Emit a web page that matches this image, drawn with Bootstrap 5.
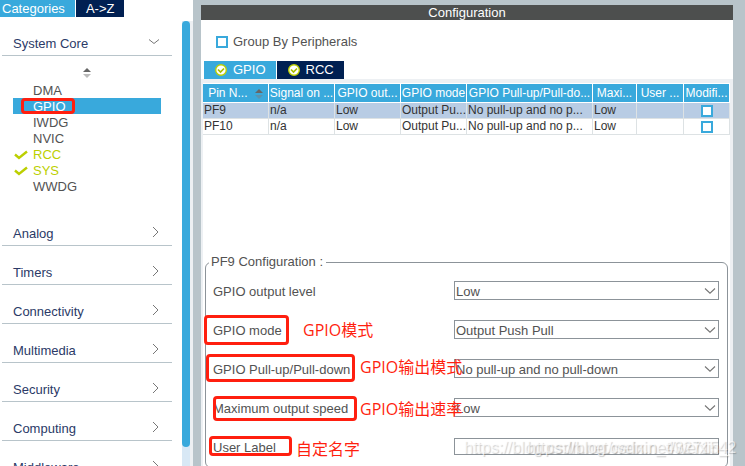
<!DOCTYPE html>
<html lang="en">
<head>
<meta charset="utf-8">
<meta name="viewport" content="width=device-width, initial-scale=1">
<title>Pin Configuration</title>
<link rel="stylesheet" href="https://cdn.jsdelivr.net/npm/bootstrap@5.3.0/dist/css/bootstrap.min.css">
<style>
:root{--sky:#39a9dc;--navy:#002052;--slate:#b8c4ca;--ink:#525252;--line:#8c9399;--pale:#edf0f3;--red:#ff1f0f}
body{font-family:"Liberation Sans",Arial,sans-serif;font-size:13px;line-height:16px;color:var(--ink);background:var(--slate)}
button{font:inherit}
.app{height:100vh;overflow:hidden}
.side{width:193px}
.side .tabs{gap:1px}
.side .tabs button,.tab-line button{border:0;border-radius:0;color:#fff;background:var(--navy)}
.side .tabs button{height:17px;padding:0 10px}
.side .tabs button:first-child{padding:0 10px 0 2px}
.side .tabs .on,.tab-line .on{background:var(--sky)}
.tree{overflow:hidden;padding-left:2px;padding-right:10px}
.cat{height:39px;padding:19px 12px 0 11px;border:0;border-bottom:1px solid var(--slate);background:none;color:#2b3a67}
.periph{padding:12px 11px 13px;margin:0}
.periph a{display:block;height:16px;line-height:18px;padding-left:20px;color:var(--ink);text-decoration:none;position:relative}
.periph a.on{background:var(--sky);color:#fff}
.periph a.ok{color:#bccf00}
.periph a svg{position:absolute;left:1px;top:4px}
.track{width:11px;background:#d8e8f5;border-right:3px solid var(--pale);margin-top:4px}
.thumb{height:426px;background:var(--sky);border-radius:4px}
.main{margin:5px 12px 0 8px;min-width:0;background:#fff}
.bar{height:15px;line-height:16px;background:#4d4f4e;color:#fff}
.group{padding:14px 15px 11px}
.sq{appearance:none;width:12px;height:12px;margin:0;border:2px solid var(--sky);background:#fff;border-radius:0;display:block}
.group .sq{margin-right:5px}
.tab-line{padding-left:3px;gap:1px}
.tab-line button{height:18px;padding:0 10px 0 11px;gap:6px}
.body-box{border:solid var(--pale);border-width:4px 3px 0 2px}
.pins{table-layout:fixed;width:100%;border-collapse:separate;border-spacing:0;font-size:12px}
.pins th,.pins td{padding:0 1px;overflow:hidden;white-space:nowrap;border-right:1px solid #dde2e4}
.pins th{height:20px;background:var(--sky);color:#fff;font-weight:400;text-align:center;border:1px solid #fff;border-left:0;padding:0}
.pins td{height:16px;line-height:15px;border-bottom:1px solid #dde2e4;color:#333}
.pins .sel td{background:#b8cce4}
.cfg{position:relative;border:1px solid var(--line);border-radius:6px;margin:119px 2px 0;padding:3px 8px 11px 7px;min-width:0}
.cfg legend{float:none;width:auto;font-size:13px;line-height:16px;margin:0 0 0 -4px;padding:0 3px 0 2px}
.cfg-row{height:19px;margin-bottom:20px}
.cfg-row label{flex:0 0 241px;padding-top:2px}
.cfg-row .form-select,.cfg-row .form-control{flex:1;min-width:0;height:19px;font-size:13px;line-height:17px;padding:1px 20px 0 1px;border:1px solid var(--line);border-radius:0;color:var(--ink);background-color:#fff}
.cfg-row .form-select{background-image:url("data:image/svg+xml,%3Csvg xmlns='http://www.w3.org/2000/svg' viewBox='0 0 12 8'%3E%3Cpath fill='none' stroke='%23757575' stroke-width='1.1' d='M1 1.5l5 4.7 5-4.7'/%3E%3C/svg%3E");background-size:12px 8px;background-position:right 2px center}
.cfg-row .form-control{height:17px}
.pen{position:absolute;border:3px solid var(--red);border-radius:4px;pointer-events:none}
.note{position:absolute;color:var(--red);font:16px/20px "Open Sans","Noto Sans CJK SC",sans-serif;white-space:nowrap}
.stamp{position:absolute;font-size:16px;line-height:18px;white-space:nowrap;color:rgba(255,255,255,.65);text-shadow:1px 1px 1px rgba(0,0,0,.2);pointer-events:none}
</style>
</head>
<body>
<div class="app d-flex">
<aside class="side d-flex flex-column bg-white flex-shrink-0">
  <div class="tabs d-flex"><button class="on" type="button">Categories</button><button type="button">A-&gt;Z</button></div>
  <div class="d-flex flex-grow-1 overflow-hidden">
    <nav class="tree flex-grow-1">
      <button class="cat d-flex w-100 justify-content-between" type="button">System Core<svg width="12" height="12"><path d="M1 3.5l5 4 5-4" fill="none" stroke="#777"/></svg></button>
      <div class="periph">
        <svg class="d-block mx-auto mb-1" width="8" height="10"><path d="M0 4l4-4 4 4z" fill="#666"/><path d="M0 6h8l-4 4z" fill="#bbb"/></svg>
        <a href="#">DMA</a>
        <a href="#" class="on">GPIO<span class="pen" style="left:8px;top:0;width:54px;height:16px"></span></a>
        <a href="#">IWDG</a><a href="#">NVIC</a>
        <a href="#" class="ok"><svg width="14" height="10"><path d="M1 4.5l4 3.5 8-6.500" fill="none" stroke="#bccf00" stroke-width="2.400"/></svg>RCC</a>
        <a href="#" class="ok"><svg width="14" height="10"><path d="M1 4.5l4 3.5 8-6.500" fill="none" stroke="#bccf00" stroke-width="2.400"/></svg>SYS</a>
        <a href="#">WWDG</a>
      </div>
      <button class="cat d-flex w-100 justify-content-between" type="button">Analog<svg width="8" height="12"><path d="M1 1l5 5-5 5" fill="none" stroke="#777"/></svg></button>
      <button class="cat d-flex w-100 justify-content-between" type="button">Timers<svg width="8" height="12"><path d="M1 1l5 5-5 5" fill="none" stroke="#777"/></svg></button>
      <button class="cat d-flex w-100 justify-content-between" type="button">Connectivity<svg width="8" height="12"><path d="M1 1l5 5-5 5" fill="none" stroke="#777"/></svg></button>
      <button class="cat d-flex w-100 justify-content-between" type="button">Multimedia<svg width="8" height="12"><path d="M1 1l5 5-5 5" fill="none" stroke="#777"/></svg></button>
      <button class="cat d-flex w-100 justify-content-between" type="button">Security<svg width="8" height="12"><path d="M1 1l5 5-5 5" fill="none" stroke="#777"/></svg></button>
      <button class="cat d-flex w-100 justify-content-between" type="button">Computing<svg width="8" height="12"><path d="M1 1l5 5-5 5" fill="none" stroke="#777"/></svg></button>
      <button class="cat d-flex w-100 justify-content-between" type="button">Middleware<svg width="8" height="12"><path d="M1 1l5 5-5 5" fill="none" stroke="#777"/></svg></button>
    </nav>
    <div class="track flex-shrink-0"><div class="thumb"></div></div>
  </div>
</aside>
<main class="main flex-grow-1 d-flex flex-column">
  <div class="bar text-center">Configuration</div>
  <div class="group d-flex align-items-center"><input class="sq" type="checkbox" id="grp"><label for="grp">Group By Peripherals</label></div>
  <div class="tab-line d-flex">
    <button class="on d-flex align-items-center" type="button"><svg width="12" height="12"><circle cx="6" cy="6" r="5.300" fill="#fff" stroke="#bccf00" stroke-width="1.400"/><path d="M3 5.500l2.500 2.500L9 4.500" fill="none" stroke="#a9bb00" stroke-width="1.700"/></svg>GPIO</button>
    <button class="d-flex align-items-center" type="button"><svg width="12" height="12"><circle cx="6" cy="6" r="5.300" fill="#fff" stroke="#bccf00" stroke-width="1.400"/><path d="M3 5.500l2.500 2.500L9 4.500" fill="none" stroke="#a9bb00" stroke-width="1.700"/></svg>RCC</button>
  </div>
  <div class="body-box flex-grow-1">
    <table class="pins">
      <colgroup><col style="width:66px"><col style="width:66px"><col style="width:66px"><col style="width:66px"><col><col style="width:44px"><col style="width:47px"><col style="width:46px"></colgroup>
      <thead><tr><th>Pin N... <svg class="ms-1" width="8" height="10"><path d="M0 4l4-4 4 4z" fill="#666"/><path d="M0 6h8l-4 4z" fill="#5b93ae"/></svg></th><th>Signal on ...</th><th>GPIO out...</th><th>GPIO mode</th><th>GPIO Pull-up/Pull-do...</th><th>Maxi...</th><th>User ...</th><th>Modifi...</th></tr></thead>
      <tbody>
        <tr class="sel"><td>PF9</td><td>n/a</td><td>Low</td><td>Output Pu...</td><td>No pull-up and no p...</td><td>Low</td><td></td><td><input class="sq mx-auto" type="checkbox" aria-label="PF9 modified"></td></tr>
        <tr><td>PF10</td><td>n/a</td><td>Low</td><td>Output Pu...</td><td>No pull-up and no p...</td><td>Low</td><td></td><td><input class="sq mx-auto" type="checkbox" aria-label="PF10 modified"></td></tr>
      </tbody>
    </table>
    <fieldset class="cfg">
      <legend>PF9 Configuration :</legend>
      <div class="cfg-row d-flex align-items-center mt-2"><label for="lvl">GPIO output level</label><select class="form-select" id="lvl"><option>Low</option></select></div>
      <div class="cfg-row d-flex align-items-center"><label for="mode">GPIO mode</label><select class="form-select" id="mode"><option>Output Push Pull</option></select></div>
      <div class="cfg-row d-flex align-items-center"><label for="pull">GPIO Pull-up/Pull-down</label><select class="form-select" id="pull"><option>No pull-up and no pull-down</option></select></div>
      <div class="cfg-row d-flex align-items-center"><label for="spd">Maximum output speed</label><select class="form-select" id="spd"><option>Low</option></select></div>
      <div class="cfg-row d-flex align-items-center mb-0"><label for="usr">User Label</label><input class="form-control" id="usr" type="text"></div>
      <span class="pen" style="left:-2px;top:45px;width:85px;height:30px"></span>
      <span class="pen" style="left:0;top:84px;width:149px;height:28px"></span>
      <span class="pen" style="left:7px;top:126px;width:144px;height:25px"></span>
      <span class="pen" style="left:3px;top:166px;width:83px;height:20px"></span>
      <span class="note" style="left:97px;top:50px">GPIO模式</span>
      <span class="note" style="left:154px;top:87px">GPIO输出模式</span>
      <span class="note" style="left:154px;top:129px">GPIO输出速率</span>
      <span class="note" style="left:90px;top:169px">自定名字</span>
      <span class="stamp" style="left:258px;top:169px">https://blog.csdn.net/weixin_43271542</span>
      <span class="stamp" style="left:321px;top:169px" aria-hidden="true">https://blog.csdn.net/weixin_</span>
    </fieldset>
  </div>
</main>
</div>
<script src="https://cdn.jsdelivr.net/npm/bootstrap@5.3.0/dist/js/bootstrap.bundle.min.js"></script>
</body>
</html>
